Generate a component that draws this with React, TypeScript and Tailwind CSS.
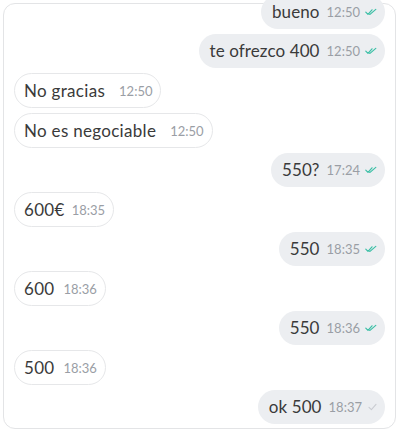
import React from "react";

type Msg = { text: string; time: string; out: boolean; read?: boolean; gap?: number };

const msgs: Msg[] = [
  { text: "bueno", time: "12:50", out: true, read: true },
  { text: "te ofrezco 400", time: "12:50", out: true, read: true },
  { text: "No gracias", time: "12:50", out: false, gap: 14 },
  { text: "No es negociable", time: "12:50", out: false, gap: 14 },
  { text: "550?", time: "17:24", out: true, read: true },
  { text: "600€", time: "18:35", out: false, gap: 7 },
  { text: "550", time: "18:35", out: true, read: true },
  { text: "600", time: "18:36", out: false },
  { text: "550", time: "18:36", out: true, read: true },
  { text: "500", time: "18:36", out: false },
  { text: "ok 500", time: "18:37", out: true, read: false },
];

function DoubleCheck() {
  return (
    <svg width="12" height="8" viewBox="0 0 12 8" fill="none" className="ml-[5px]">
      <path d="M0.8 4.2 L3 6.4 L7 1.8" stroke="#3bbfa6" strokeWidth="1.2" strokeLinecap="round" strokeLinejoin="round" />
      <path d="M4.6 6.2 L5 6.4 L10.8 1.4" stroke="#3bbfa6" strokeWidth="1.2" strokeLinecap="round" strokeLinejoin="round" />
    </svg>
  );
}

function SingleCheck() {
  return (
    <svg width="9" height="8" viewBox="0 0 9 8" fill="none" className="ml-[6px]">
      <path d="M1 4.4 L3.4 6.6 L8 1.4" stroke="#c9ccd1" strokeWidth="1.1" strokeLinecap="round" strokeLinejoin="round" />
    </svg>
  );
}

export default function App() {
  return (
    <div className="w-[400px] h-[434px] bg-white p-[3px] overflow-hidden" style={{ fontFamily: "Lato, 'Open Sans', sans-serif" }}>
      <div className="h-[426px] w-[393px] rounded-[12px] border border-[#e3e4e6] px-[10px]">
        <div className="mt-[-9px] flex flex-col gap-[5px]">
          {msgs.map((m, i) =>
            m.out ? (
              <div key={i} className="flex justify-end">
                <div className="h-[34px] flex items-center rounded-full bg-[#eceef1] pl-[11px] pr-[8px]">
                  <span className="text-[17px] tracking-[0.1px] text-[#3a3a3a]">{m.text}</span>
                  <span className="ml-[7px] text-[13px] text-[#9a9ea5] mt-[2px]">{m.time}</span>
                  {m.read ? <DoubleCheck /> : <SingleCheck />}
                </div>
              </div>
            ) : (
              <div key={i} className="flex justify-start">
                <div className="h-[35px] flex items-center rounded-full bg-white border border-[#e6e7e9] pl-[9px] pr-[8px]">
                  <span className="text-[17px] tracking-[0.3px] text-[#3a3a3a]">{m.text}</span>
                  <span className="text-[13px] text-[#9a9ea5] mt-[2px]" style={{ marginLeft: m.gap ?? 9 }}>
                    {m.time}
                  </span>
                </div>
              </div>
            )
          )}
        </div>
      </div>
    </div>
  );
}
